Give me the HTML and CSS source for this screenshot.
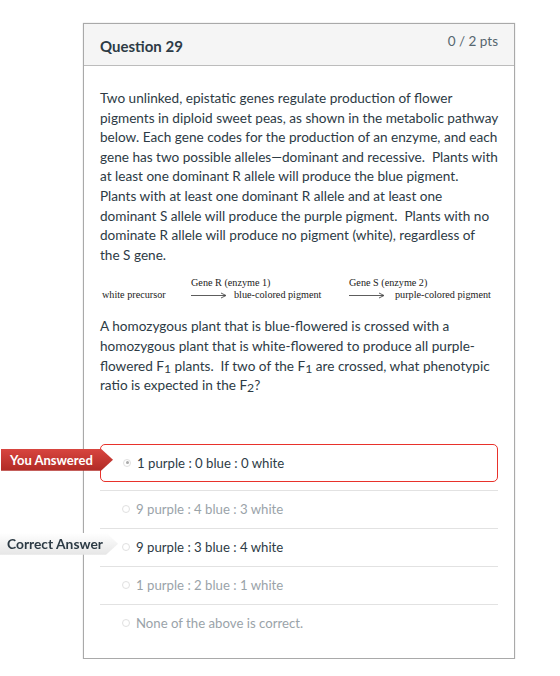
FILE: index.html
```html
<!DOCTYPE html>
<html>
    <head>
        <meta charset="UTF-8">
        <title>Question 29</title>
        <link rel="stylesheet" href="styles.css">
    </head>
    <body>
        <div class="question">
            <div class="header">
                <h2 class="title">Question 29</h2>
                <div class="points">0 / 2 pts</div>
            </div>
            <div class="content">
                <p class="text">Two unlinked, epistatic genes regulate production of flower pigments in diploid sweet peas, as shown in the metabolic pathway below. Each gene codes for the production of an enzyme, and each gene has two possible alleles—dominant and recessive.&nbsp; Plants with at least one dominant R allele will produce the blue pigment.&nbsp; Plants with at least one dominant R allele and at least one dominant S allele will produce the purple pigment.&nbsp; Plants with no dominate R allele will produce no pigment (white), regardless of the&nbsp;S&nbsp;gene.</p>
                <div class="pathway">
                    <div class="start">white precursor</div>
                    <div class="step step-r">
                        <div class="gene">Gene R (enzyme 1)</div>
                        <div class="result">
                            <svg class="arrow" width="36" height="7" viewBox="0 0 36 7"><path d="M0 3.5H34M30 1L35 3.5L30 6" fill="none" stroke="#333" stroke-width="0.8"/></svg>
                            <span>blue-colored pigment</span>
                        </div>
                    </div>
                    <div class="step step-s">
                        <div class="gene">Gene S (enzyme 2)</div>
                        <div class="result">
                            <svg class="arrow" width="36" height="7" viewBox="0 0 36 7"><path d="M0 3.5H34M30 1L35 3.5L30 6" fill="none" stroke="#333" stroke-width="0.8"/></svg>
                            <span>purple-colored pigment</span>
                        </div>
                    </div>
                </div>
                <p class="text">A homozygous plant that is blue-flowered is crossed with a homozygous plant that is white-flowered to produce all purple-flowered F<sub>1</sub> plants.&nbsp; If two of the F<sub>1</sub> are crossed, what phenotypic ratio is expected in the F<sub>2</sub>?</p>
                <ul class="answers">
                    <li class="answer selected">
                        <span class="flag flag-wrong">You Answered</span>
                        <span class="radio checked"></span>
                        <span class="label">1 purple : 0 blue : 0 white</span>
                    </li>
                    <li class="answer">
                        <span class="radio"></span>
                        <span class="label">9 purple : 4 blue : 3 white</span>
                    </li>
                    <li class="answer correct">
                        <span class="flag flag-correct">Correct Answer</span>
                        <span class="radio"></span>
                        <span class="label">9 purple : 3 blue : 4 white</span>
                    </li>
                    <li class="answer">
                        <span class="radio"></span>
                        <span class="label">1 purple : 2 blue : 1 white</span>
                    </li>
                    <li class="answer">
                        <span class="radio"></span>
                        <span class="label">None of the above is correct.</span>
                    </li>
                </ul>
            </div>
        </div>
    </body>
</html>
```
FILE: styles.css
```css
body{
    margin: 0;
    background-color: #FFF;
    font-family: Lato, "Open Sans", sans-serif;
    color: #2D3B45;
}
.question{
    margin: 23px 0 0 83px;
    width: 432px;
    box-sizing: border-box;
    border: 1px solid #A9A9A9;
    box-shadow: 0 0 1px #BBB;
}
.header{
    display: flex;
    justify-content: space-between;
    align-items: flex-start;
    height: 41px;
    padding: 0 16px;
    background-color: #F5F5F5;
    border-bottom: 1px solid #BCBCBC;
}
.title{
    margin: 13px 0 0;
    font-size: 15px;
    font-weight: 700;
}
.points{
    margin-top: 9px;
    font-size: 13.5px;
    color: #56656F;
}
.content{
    padding: 23px 16px 16px;
}
.text{
    margin: 0;
    font-size: 13.6px;
    line-height: 19.6px;
}
sub{
    font-size: 90%;
    line-height: 0;
    vertical-align: -2px;
}
.pathway{
    display: flex;
    align-items: flex-end;
    height: 36px;
    padding: 0 0 16px 2px;
    font-family: "Liberation Serif", serif;
    font-size: 10.2px;
    color: #222;
}
.start{
    width: 89px;
    margin-bottom: 1px;
}
.step-r{
    width: 158px;
}
.gene{
    line-height: 12px;
}
.result{
    display: flex;
    align-items: center;
    gap: 7px;
    line-height: 12px;
}
.step-s .result{
    gap: 10px;
}
.answers{
    list-style: none;
    margin: 48px 0 0;
    padding: 0;
    position: relative;
}
.answer{
    position: relative;
    display: flex;
    align-items: center;
    height: 38px;
    padding-left: 22px;
    border-top: 1px solid #E2E2E2;
    box-sizing: border-box;
    font-size: 13.2px;
    color: #9AA3A9;
}
.answer.selected{
    border: 1px solid #E8322B;
    border-radius: 5px;
    margin-bottom: 8px;
    padding-left: 22px;
    color: #2D3B45;
}
.answer.correct{
    color: #2D3B45;
}
.radio{
    width: 6px;
    height: 6px;
    border: 1px solid #E0E0E0;
    border-radius: 50%;
    margin-right: 6px;
    position: relative;
    flex: none;
}
.radio.checked::after{
    content: "";
    position: absolute;
    left: 1.5px;
    top: 1.5px;
    width: 3px;
    height: 3px;
    border-radius: 50%;
    background-color: #AAA;
}
.flag{
    position: absolute;
    left: -100px;
    height: 22px;
    line-height: 22px;
    box-sizing: border-box;
    font-weight: 700;
    white-space: nowrap;
}
.flag-wrong{
    top: 4px;
    width: 112px;
    padding-left: 9px;
    font-size: 13px;
    color: #FFF;
    background: linear-gradient(#D8453F, #B02A25);
    clip-path: polygon(0 0, 100px 0, 112px 50%, 100px 100%, 0 100%);
}
.flag-correct{
    top: 4px;
    width: 118px;
    padding-left: 7px;
    font-size: 13.8px;
    color: #2D3B45;
    background: linear-gradient(#FFF, #E6E6E6);
    clip-path: polygon(0 0, 106px 0, 118px 50%, 106px 100%, 0 100%);
    filter: drop-shadow(0 0 0.6px #999);
}
```
